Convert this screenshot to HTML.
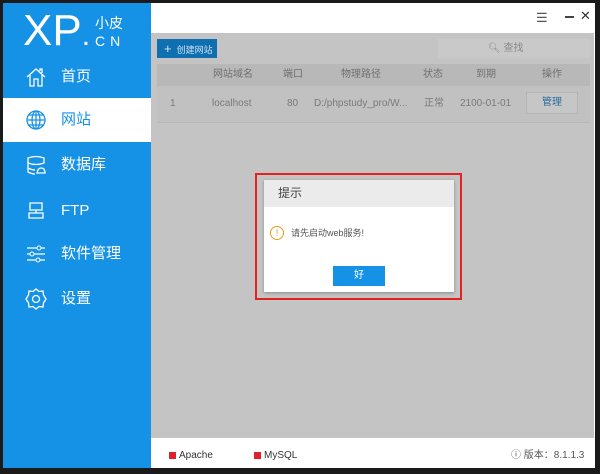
<!DOCTYPE html><html><head><meta charset="utf-8"><style>
*{margin:0;padding:0;box-sizing:border-box}
body{width:600px;height:473px;background:#1a1a1a;position:relative;overflow:hidden;font-family:"Liberation Sans","Noto Sans CJK SC",sans-serif}
.a{position:absolute}
.side{left:3px;top:3px;width:148px;height:465px;background:#1592e5;color:#fff}
.nav{position:absolute;left:0;width:148px;height:44px;font-size:15px;line-height:44px;padding-left:58px}
.nav svg{position:absolute;left:22px;top:11px}
.g{fill:none;stroke:#fff;stroke-width:1.3}
</style></head><body>
<div class="a" style="left:151px;top:3px;width:444px;height:465px;background:#fff"></div>
<div class="a" style="left:151px;top:33px;width:443px;height:405px;background:#c4c4c4"></div>
<div class="a" style="left:536px;top:10px;color:#555;font-size:13px">☰</div>
<div class="a" style="left:565px;top:16px;width:9px;height:2px;background:#444"></div>
<div class="a" style="left:580px;top:8px;color:#333;font-size:13px">✕</div>
<div class="a" style="left:157px;top:39px;width:60px;height:19px;background:#0f6fb0;color:#cfe4f3;font-size:9px;line-height:19px;padding-left:7px"><span style="font-size:13px">+</span>&nbsp; 创建网站</div>
<div class="a" style="left:438px;top:39px;width:152px;height:19px;background:#c9c9c9;color:#8a8a8a;font-size:10px;line-height:19px;padding-left:50px">🔍︎ 查找</div>
<div class="a" style="left:157px;top:64px;width:433px;height:22px;background:#b8b8b8"></div>
<div class="a" style="left:157px;top:86px;width:433px;height:37px;background:#c1c1c1;border-bottom:1px solid #b8b8b8"></div>
<div class="a" style="top:64px;left:0;width:600px;font-size:10px;color:#707070;line-height:22px">
<span class="a" style="left:213px">网站域名</span><span class="a" style="left:283px">端口</span><span class="a" style="left:341px">物理路径</span><span class="a" style="left:423px">状态</span><span class="a" style="left:476px">到期</span><span class="a" style="left:542px">操作</span></div>
<div class="a" style="top:93px;left:0;width:600px;font-size:10px;color:#7a7a7a;line-height:22px">
<span class="a" style="left:170px">1</span><span class="a" style="left:212px">localhost</span><span class="a" style="left:287px">80</span><span class="a" style="left:314px">D:/phpstudy_pro/W...</span><span class="a" style="left:424px">正常</span><span class="a" style="left:460px">2100-01-01</span></div>
<div class="a" style="left:526px;top:92px;width:52px;height:22px;border:1px solid #b5b5b5;background:#c6c6c6;color:#2a6fa0;font-size:10px;text-align:center;line-height:20px">管理</div>
<div class="a" style="left:151px;top:438px;width:444px;height:30px;background:#fff;font-size:10px;color:#333;line-height:36px">
<span class="a" style="left:18px;top:14px;width:7px;height:7px;background:#e0202a"></span><span class="a" style="left:28px">Apache</span>
<span class="a" style="left:103px;top:14px;width:7px;height:7px;background:#e0202a"></span><span class="a" style="left:113px">MySQL</span>
<span class="a" style="left:360px;color:#555">ⓘ 版本：8.1.1.3</span></div>
<div class="a" style="left:255px;top:173px;width:207px;height:127px;border:2px solid #e52222"></div>
<div class="a" style="left:264px;top:180px;width:190px;height:112px;background:#fff;box-shadow:0 1px 3px rgba(0,0,0,.3)">
<div style="height:27px;background:#ebebeb;font-size:12px;color:#444;line-height:27px;padding-left:14px">提示</div>
<div class="a" style="left:6px;top:46px;width:14px;height:14px;border:1.3px solid #e0a020;border-radius:50%;color:#e0a020;font-size:9px;text-align:center;line-height:12px">!</div>
<div class="a" style="left:27px;top:46px;font-size:9px;color:#555">请先启动web服务!</div>
<div class="a" style="left:69px;top:86px;width:52px;height:20px;background:#1592e5;color:#fff;font-size:10px;text-align:center;line-height:20px">好</div></div>
<div class="a side">
<div class="a" style="left:20px;top:2px;font-size:44px;line-height:52px;font-family:'Liberation Sans',sans-serif">XP<span style="font-size:30px">.</span></div>
<div class="a" style="left:92px;top:10px;font-size:14px">小皮</div>
<div class="a" style="left:92px;top:30px;font-size:14px;letter-spacing:5px">CN</div>
<div class="nav" style="top:52px"><svg width="22" width="22" height="22"><path class="g" d="M2 11L11 3 20 11M5 9V20H9V13H13V20H17V9M15 5V3H17V7"/></svg>首页</div>
<div class="nav" style="top:95px;background:#fff;color:#1592e5"><svg width="22" height="22"><g fill="none" stroke="#1592e5" stroke-width="1.3"><circle cx="11" cy="11" r="9"/><ellipse cx="11" cy="11" rx="4" ry="9"/><path d="M2 11H20M4 6H18M4 16H18M11 2V20"/></g></svg>网站</div>
<div class="nav" style="top:140px"><svg width="22" height="22"><path class="g" d="M3 4Q11 1 19 4V9Q11 12 3 9ZM3 9V14Q7 16 10 16M3 14V18Q7 20 10 20M12 19H20Q20 14 16 14Q13 14 12 19Z"/></svg>数据库</div>
<div class="nav" style="top:186px"><svg width="22" height="22"><path class="g" d="M5 3H17V10H5ZM11 10V13M4 13H18V18H4Z"/></svg>FTP</div>
<div class="nav" style="top:229px"><svg width="22" height="22"><path class="g" d="M2 5H20M2 11H20M2 17H20"/><circle cx="14" cy="5" r="2" fill="#1592e5" stroke="#fff"/><circle cx="7" cy="11" r="2" fill="#1592e5" stroke="#fff"/><circle cx="13" cy="17" r="2" fill="#1592e5" stroke="#fff"/></svg>软件管理</div>
<div class="nav" style="top:274px"><svg width="22" height="22"><path class="g" d="M11 1L14 3.5 18 3 18.5 7 21 11 18.5 15 18 19 14 18.5 11 21 8 18.5 4 19 3.5 15 1 11 3.5 7 4 3 8 3.5Z"/><circle class="g" cx="11" cy="11" r="3.5"/></svg>设置</div>
</div>
</body></html>
